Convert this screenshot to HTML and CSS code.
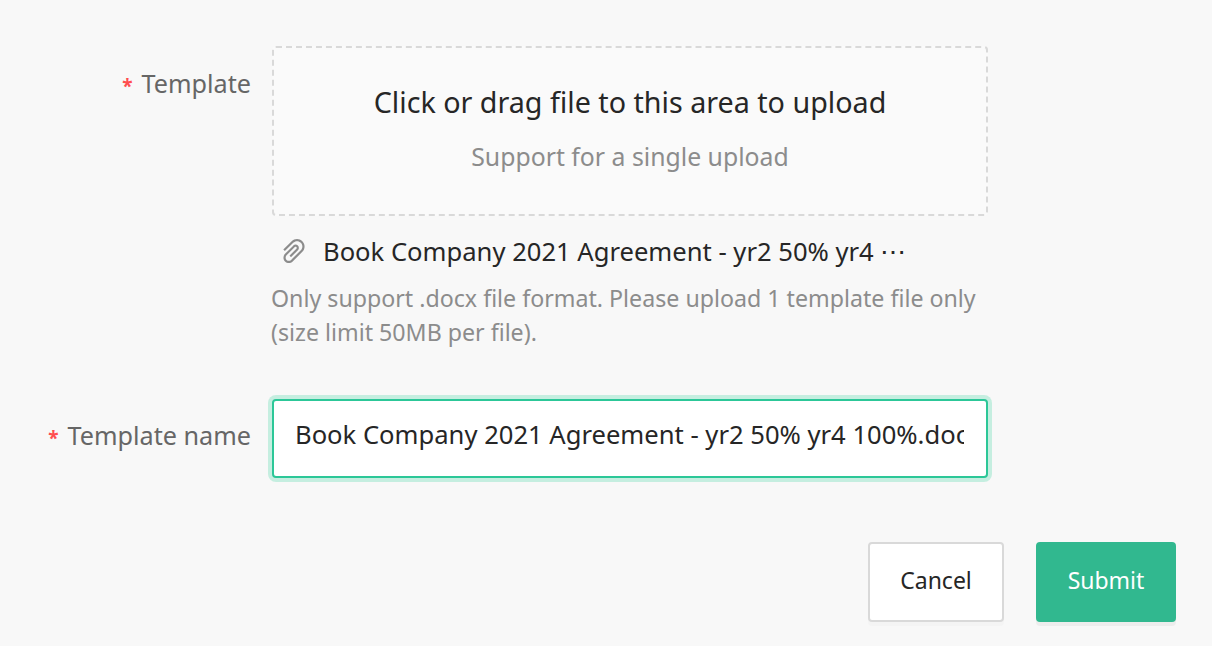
FILE: index.html
```html
<!DOCTYPE html>
<html lang="en">
<head>
    <meta charset="UTF-8">
    <meta name="viewport" content="width=device-width, initial-scale=1.0">
    <title>Upload Template</title>
    <link rel="stylesheet" href="styles.css">
</head>
<body>
    <form class="template-form">
        <div class="form-row">
            <label class="form-label"><span class="required">*</span>Template</label>
            <div class="form-control">
                <div class="dragger">
                    <p class="dragger-title">Click or drag file to this area to upload</p>
                    <p class="dragger-hint">Support for a single upload</p>
                </div>
                <div class="file-item">
                    <svg class="file-icon" viewBox="64 64 896 896" fill="#8c8c8c">
                        <path d="M779.3 196.6c-94.2-94.2-247.6-94.2-341.7 0l-261 260.8c-1.7 1.7-2.6 4-2.6 6.4s.9 4.7 2.6 6.4l36.9 36.9a9 9 0 0 0 12.7 0l261-260.8c32.4-32.4 75.5-50.2 121.3-50.2s88.9 17.8 121.2 50.2c32.4 32.4 50.2 75.5 50.2 121.2 0 45.8-17.8 88.8-50.2 121.2l-266 265.9-43.1 43.1c-40.3 40.3-105.8 40.3-146.1 0-19.5-19.5-30.2-45.4-30.2-73s10.7-53.5 30.2-73l263.9-263.8c6.7-6.6 15.5-10.3 24.9-10.3h.1c9.4 0 18.1 3.7 24.7 10.3 6.7 6.7 10.3 15.5 10.3 24.9 0 9.3-3.7 18.1-10.3 24.7L372.4 653c-1.7 1.7-2.6 4-2.6 6.4s.9 4.7 2.6 6.4l36.9 36.9a9 9 0 0 0 12.7 0l215.6-215.6c19.9-19.9 30.8-46.3 30.8-74.4s-11-54.6-30.8-74.4c-41.1-41.1-107.9-41-149 0L463 364 224.8 602.1A172.22 172.22 0 0 0 174 724.8c0 46.3 18.1 89.8 50.8 122.5 33.9 33.8 78.3 50.7 122.7 50.7 44.4 0 88.8-16.9 122.6-50.7l309.2-309C824.8 492.7 850 432 850 367.5c.1-64.6-25.1-125.3-70.7-170.9z"/>
                    </svg>
                    <span class="file-name">Book Company 2021 Agreement - yr2 50% yr4 ⋯</span>
                </div>
                <p class="form-help">Only support .docx file format. Please upload 1 template file only (size limit 50MB per file).</p>
            </div>
        </div>

        <div class="form-row name-row">
            <label class="form-label" for="templateName"><span class="required">*</span>Template name</label>
            <div class="form-control">
                <input class="text-input" id="templateName" type="text" value="Book Company 2021 Agreement - yr2 50% yr4 100%.docx">
            </div>
        </div>

        <div class="form-actions">
            <button type="button" class="btn">Cancel</button>
            <button type="button" class="btn btn-primary">Submit</button>
        </div>
    </form>
</body>
</html>
```

FILE: styles.css
```css
* {
    box-sizing: border-box;
}
html, body {
    height: 100%;
}
body {
    margin: 0;
    background: #f8f8f8;
    color: #262626;
    font-family: "Noto Sans", "Open Sans", sans-serif;
    font-size: 25.6px;
    overflow: hidden;
}
p {
    margin: 0;
}
.template-form {
    padding: 46px 36px 0 0;
}
.form-row {
    display: flex;
    width: 988px;
}
.form-label {
    width: 251px;
    margin-right: 21px;
    flex: none;
    text-align: right;
    color: #666;
    font-size: 25.2px;
    line-height: 74px;
}
.required {
    color: #ff4d4f;
    font-size: 19px;
    font-weight: 700;
    margin-right: 9px;
}
.form-control {
    flex: 1;
    min-width: 0;
}
.dragger {
    height: 170px;
    padding-top: 34px;
    border: 2px dashed #d9d9d9;
    border-radius: 4px;
    background: #fafafa;
    text-align: center;
}
.dragger-title {
    font-size: 28.7px;
    line-height: 40px;
}
.dragger-hint {
    margin-top: 16px;
    font-size: 24.8px;
    line-height: 36px;
    color: #8c8c8c;
}
.file-item {
    display: flex;
    align-items: center;
    height: 40px;
    margin-top: 15px;
    padding-left: 8px;
}
.file-icon {
    width: 28px;
    height: 28px;
    flex: none;
    margin-right: 15px;
}
.file-name {
    white-space: nowrap;
}
.form-help {
    margin: 10px 0 0 -1px;
    font-size: 23.2px;
    line-height: 34px;
    color: #8c8c8c;
}
.name-row {
    margin-top: 50px;
}
.name-row .form-label {
    line-height: 72px;
}
.text-input {
    display: block;
    width: 100%;
    height: 79px;
    padding: 0 22px 8px 21px;
    border: 2px solid #2cc798;
    border-radius: 4px;
    box-shadow: 0 0 0 4px #c5eee0;
    background: #fff;
    color: #262626;
    font: inherit;
    outline: none;
}
.form-actions {
    display: flex;
    justify-content: flex-end;
    gap: 32px;
    margin-top: 64px;
}
.btn {
    width: 136px;
    height: 80px;
    padding: 0 0 4px;
    border: 2px solid #d9d9d9;
    border-radius: 4px;
    background: #fff;
    box-shadow: 0 4px 0 rgba(0, 0, 0, 0.015);
    color: #262626;
    font: inherit;
    font-size: 23px;
}
.btn-primary {
    width: 140px;
    border-color: #31b88f;
    background: #31b88f;
    box-shadow: 0 4px 0 rgba(0, 0, 0, 0.045);
    color: #fff;
}
```
